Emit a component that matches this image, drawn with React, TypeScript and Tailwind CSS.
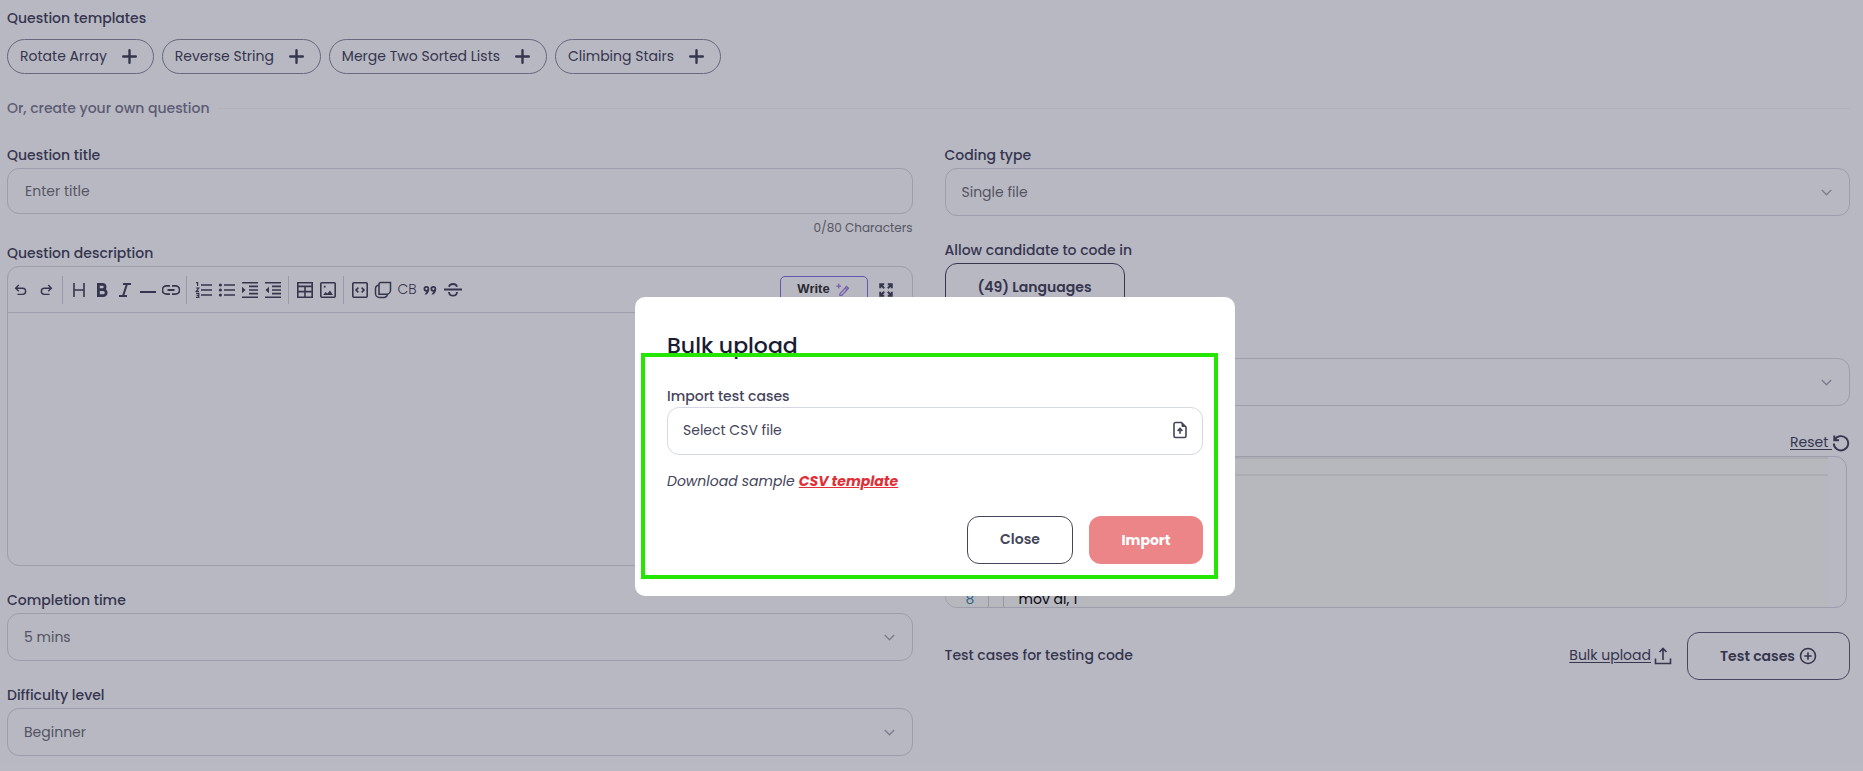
import { ReactNode, SVGProps } from 'react'

const templates = ['Rotate Array', 'Reverse String', 'Merge Two Sorted Lists', 'Climbing Stairs']

function Svg({ children, ...props }: SVGProps<SVGSVGElement>) {
  return (
    <svg width="18" height="18" viewBox="0 0 18 18" fill="none" stroke="currentColor" strokeWidth="1.6" aria-hidden="true" {...props}>
      {children}
    </svg>
  )
}

function Tool({ label, className = 'w-[23px]', children }: { label: string; className?: string; children: ReactNode }) {
  return (
    <button type="button" aria-label={label} className={`flex h-7 items-center justify-center ${className}`}>
      {children}
    </button>
  )
}

function Divider() {
  return <span className="h-7 w-px shrink-0 bg-[#d5d5de]" />
}

function SelectField({ id, label, value }: { id: string; label: string; value: string }) {
  return (
    <div>
      <label htmlFor={id} className="block h-[26px] font-medium leading-[26px]">{label}</label>
      <div className="grid items-center">
        <select id={id} className="col-start-1 row-start-1 h-12 w-full appearance-none rounded-xl border border-[#d8d8de] px-4 text-[#6f6f75]">
          <option>{value}</option>
        </select>
        <svg width="11" height="7" viewBox="0 0 11 7" fill="none" stroke="#aaaab4" strokeWidth="1.4" className="pointer-events-none col-start-1 row-start-1 mr-[18px] justify-self-end" aria-hidden="true">
          <path d="M.8 1 5.500 5.700 10.200 1" />
        </svg>
      </div>
    </div>
  )
}

function Toolbar() {
  return (
    <div className="flex h-[46px] items-center border-b border-[#d8d8de]">
      <div className="mr-1 flex">
        <Tool label="Undo" className="w-[25px]">
          <Svg width="16"><path d="M6.500 3.500 3 7l3.500 3.500M3.200 7h7.600a3.400 3.400 0 0 1 0 6.900H5" /></Svg>
        </Tool>
        <Tool label="Redo" className="w-[25px]">
          <Svg width="16"><path d="M11.500 3.500 15 7l-3.500 3.500M14.800 7H7.200a3.400 3.400 0 0 0 0 6.900H13" /></Svg>
        </Tool>
      </div>
      <Divider />
      <div className="flex px-1">
        <Tool label="Heading">
          <Svg><path d="M4 2v14M14 2v14M4 9h10" /></Svg>
        </Tool>
        <Tool label="Bold">
          <Svg strokeWidth="2.8"><path d="M5.4 3.4h4a2.6 2.6 0 0 1 0 5.3h-4zM5.4 8.7h4.8a2.8 2.8 0 0 1 0 5.9H5.4z" /></Svg>
        </Tool>
        <Tool label="Italic">
          <Svg strokeWidth="2"><path d="M7 3h8M3 15h8M11 3 7 15" /></Svg>
        </Tool>
        <Tool label="Horizontal line">
          <Svg strokeWidth="2"><path d="M1 11h16" /></Svg>
        </Tool>
        <Tool label="Link">
          <Svg strokeWidth="1.8"><path d="M8 4.8H4.6a4.2 4.2 0 0 0 0 8.4H8M10 4.8h3.4a4.2 4.2 0 0 1 0 8.4H10M5.5 9h7" /></Svg>
        </Tool>
      </div>
      <Divider />
      <div className="flex pr-1 pl-[5px]">
        <Tool label="Ordered list">
          <Svg><path d="M6 4h11M6 9h11M6 14h11" /><path strokeWidth="1.2" d="M1 1.600h1.6V5M1 7h2.800L1.200 10.400H4M1 12.400h2.800v4H1M1.600 14.400h2" /></Svg>
        </Tool>
        <Tool label="Bullet list">
          <Svg><path d="M6 4h11M6 9h11M6 14h11" /><path strokeWidth="3.200" strokeLinecap="round" d="M2.4 4h.01M2.4 9h.01M2.4 14h.01" /></Svg>
        </Tool>
        <Tool label="Indent">
          <Svg><path d="M1 1.8h16M8 5.4h9M8 9h9M8 12.6h9M1 16.2h16" /><path fill="currentColor" stroke="none" d="M1 5.8 4.500 9 1 12.200z" /></Svg>
        </Tool>
        <Tool label="Outdent">
          <Svg><path d="M1 1.8h16M8 5.4h9M8 9h9M8 12.6h9M1 16.2h16" /><path fill="currentColor" stroke="none" d="M5 5.8 1.500 9 5 12.200z" /></Svg>
        </Tool>
      </div>
      <Divider />
      <div className="flex px-1">
        <Tool label="Table">
          <Svg><path d="M1.800 1.800h14.400v14.400H1.800zM1.800 5.400h14.400M1.800 10.600h14.400M9 5.400V16" /></Svg>
        </Tool>
        <Tool label="Image">
          <Svg><rect x="1.8" y="1.8" width="14.4" height="14.4" rx="1" /><path fill="currentColor" stroke="none" d="m4.200 14 2.300-3 2 1.600L11 9.500l3 4.500zM4.800 4.800h1.800v1.800H4.800z" /></Svg>
        </Tool>
      </div>
      <Divider />
      <div className="flex px-1">
        <Tool label="Code">
          <Svg><rect x="1.8" y="1.8" width="14.4" height="14.4" rx="1" /><path d="M7.400 6.600 5 9l2.400 2.400M10.600 6.600 13 9l-2.400 2.400" /></Svg>
        </Tool>
        <Tool label="Copy block">
          <Svg strokeWidth="1.5"><path d="M7 1.5h9.500v7.700a4 4 0 0 1-4 4H5V3.500a2 2 0 0 1 2-2z" /><path d="M5 4.300A3.200 3.200 0 0 0 1.500 7.500v5a4 4 0 0 0 4 4h4a4 4 0 0 0 4-3.300" /></Svg>
        </Tool>
        <Tool label="Code block" className="w-[26px] pb-[2px] text-sm font-light">CB</Tool>
        <Tool label="Quote" className="w-5">
          <Svg width="16" height="16" fill="currentColor" stroke="none"><path fillRule="evenodd" d="M5 4.5a3.2 3.2 0 0 1 3.2 3.3c0 2.8-1.4 4.7-3.2 6.2H2.8c1-1 1.7-1.9 2.1-3A3.2 3.2 0 0 1 5 4.5zm0 1.9a1.3 1.3 0 1 0 0 2.6 1.3 1.3 0 0 0 0-2.6zM12.8 4.5A3.2 3.2 0 0 1 16 7.8c0 2.8-1.4 4.7-3.2 6.2h-2.2c1-1 1.7-1.9 2.1-3a3.2 3.2 0 0 1 .1-6.5zm0 1.9a1.3 1.3 0 1 0 0 2.6 1.3 1.3 0 0 0 0-2.6z" /></Svg>
        </Tool>
        <Tool label="Strikethrough" className="w-[26px]">
          <Svg strokeWidth="1.8"><path d="M0 8.5h18M5 5.800c.4-1.900 2-2.800 4-2.800s3.600.9 4 2.800M5 11c.2 2.4 1.9 3.7 4 3.7s3.800-1.300 4-3.700" /></Svg>
        </Tool>
      </div>
      <button type="button" className="ml-auto flex h-[27px] w-[88px] items-center justify-center gap-[6px] rounded-[5px] border border-[#8672ea] font-['Liberation_Sans',sans-serif] text-[13px] font-bold text-[#333]">
        Write
        <Svg width="14" height="14" stroke="#a180dc" strokeWidth="1.7"><path d="m5 14 8.500-9.500 2.500 2.300L7.500 16H5zM11.800 6.500l2.400 2.200M3.500 1v6M.5 4h6" /></Svg>
      </button>
      <Tool label="Full screen" className="mr-[14px] ml-[6px] w-6">
        <Svg width="16" height="16" strokeWidth="2.2"><path d="M2.5 7V2.5H7M3 3l4 4M11 2.5h4.5V7M15 3l-4 4M2.5 11v4.5H7M3 15l4-4M11 15.5h4.5V11M15 15l-4-4" /></Svg>
      </Tool>
    </div>
  )
}

function BulkUploadModal() {
  return (
    <div className="absolute inset-0 flex items-start justify-center bg-[#151536]/30 pt-[297px] pl-[7px]">
      <div role="dialog" aria-labelledby="bulk-title" className="relative w-[600px] rounded-[10px] bg-white p-8">
        <h2 id="bulk-title" className="text-[22px] font-medium leading-[33px] text-[#1a1c33]">Bulk upload</h2>
        <p id="import-label" className="mt-[22px] h-[23px] font-medium leading-6">Import test cases</p>
        <button type="button" aria-describedby="import-label" className="flex h-12 w-full items-center justify-between rounded-xl border border-[#d6d9e4] pr-[13px] pb-[2px] pl-[15px]">
          Select CSV file
          <Svg><path d="M10.500 1.500H4.600A1.600 1.600 0 0 0 3 3.100v11.800a1.600 1.600 0 0 0 1.600 1.600h8.800a1.600 1.600 0 0 0 1.600-1.600V6zM9 12.800V8M6.600 9.900 9 7.500l2.400 2.400" /><path fill="currentColor" strokeWidth="1" d="M11 2v3.500h3.500z" /></Svg>
        </button>
        <p className="mt-[14px] leading-6 italic">
          Download sample <a href="#template" className="font-bold text-[#e02f37] underline">CSV template</a>
        </p>
        <div className="mt-[23px] flex justify-end gap-4">
          <button type="button" className="h-12 w-[106px] rounded-xl border border-[#44445a] pb-[2px] font-semibold">Close</button>
          <button type="button" className="h-12 w-[114px] rounded-xl bg-[#eb8588] font-bold text-white">Import</button>
        </div>
        {/* Highlight frame */}
        <div className="pointer-events-none absolute top-14 right-[17px] bottom-[17px] left-[6px] border-4 border-[#25e600]" />
      </div>
    </div>
  )
}

export default function App() {
  return (
    <div className="relative min-h-screen bg-white pt-[6px] pr-[13px] pb-[15px] pl-[7px] font-[Poppins,Inter,sans-serif] text-sm text-[#44445a]">
      <h3 className="font-medium leading-6">Question templates</h3>
      <div className="mt-[9px] flex gap-2">
        {templates.map((name) => (
          <button key={name} type="button" className="flex h-[35px] items-center gap-[15px] rounded-full border border-[#8c8c9c] pr-4 pl-3">
            <span className="pb-[2px]">{name}</span>
            <Svg width="15" height="15" viewBox="0 0 15 15" strokeWidth="2.4" strokeLinecap="round"><path d="M7.5 1.2v12.600M1.2 7.5h12.600" /></Svg>
          </button>
        ))}
      </div>
      <div className="mt-[22px] flex items-center gap-2 leading-6">
        <span className="font-medium text-[#7b7b8e]">Or, create your own question</span>
        <hr className="flex-1 border-[#f6f6f6]" />
      </div>

      <div className="mt-[22px] grid grid-cols-2 gap-8">
        {/* Left column */}
        <div>
          <label htmlFor="title" className="block h-[26px] font-medium leading-[26px]">Question title</label>
          <input id="title" placeholder="Enter title" className="block h-[46px] w-full rounded-xl border border-[#d8d8de] px-[17px] placeholder:text-[#757578]" />
          <p className="mt-1 text-right text-xs leading-5 text-[#757578]">0/80 Characters</p>
          <p className="mt-[2px] h-[26px] font-medium leading-[26px]">Question description</p>
          <div className="h-[300px] rounded-xl border border-[#d8d8de]">
            <Toolbar />
            <textarea aria-label="Question description" className="block h-[250px] w-full resize-none" />
          </div>
          <div className="mt-[21px] flex flex-col gap-[21px]">
            <SelectField id="time" label="Completion time" value="5 mins" />
            <SelectField id="level" label="Difficulty level" value="Beginner" />
          </div>
        </div>

        {/* Right column */}
        <div>
          <SelectField id="coding" label="Coding type" value="Single file" />
          <p className="mt-[21px] h-[26px] font-medium leading-[26px]">Allow candidate to code in</p>
          <button type="button" className="h-12 w-[180px] rounded-xl border border-[#44445a] font-semibold">(49) Languages</button>
          <div className="mt-[21px]">
            <SelectField id="language" label="Default language" value="Assembly" />
          </div>
          <div className="mt-6 flex h-[26px] items-center justify-between">
            <span className="font-medium">Code stub</span>
            <button type="button" className="flex items-center">
              <span className="pb-[2px] underline underline-offset-2">Reset&nbsp;</span>
              <Svg strokeWidth="1.9"><path d="M2.3 1.5v4.700H7M2.600 6A7.200 7.200 0 1 1 1.800 9.500" /></Svg>
            </button>
          </div>
          <div className="mr-[3px] h-[152px] overflow-hidden rounded-xl border border-[#d8d8de]">
            <div className="mr-[18px] flex h-full flex-col bg-[#fefffa]">
              <div className="h-[19px] shrink-0 border-y-2 border-[#eeeeea]" />
              <div className="mt-auto flex h-4 shrink-0 leading-4">
                <span className="w-[43px] border-r border-[#d0d0d0] pl-5 text-[#3d86a8]">8</span>
                <span className="w-[15px] border-r border-[#d0d0d0]" />
                <code className="pl-[15px] font-[Poppins,Inter,sans-serif] text-black">mov al, 1</code>
              </div>
            </div>
          </div>
          <div className="mt-6 flex items-center">
            <span className="pb-[2px] font-medium">Test cases for testing code</span>
            <a href="#bulk" className="ml-auto flex items-center gap-[3px]">
              <span className="pb-[2px] underline underline-offset-2">Bulk upload</span>
              <Svg><path d="M1.500 11.500v5h15v-5M9 13V1.500M5.500 5 9 1.500 12.500 5" /></Svg>
            </a>
            <button type="button" className="ml-[15px] flex h-12 w-[163px] items-center justify-center gap-1 rounded-xl border border-[#5d5d78] font-semibold">
              <span className="pb-px">Test cases</span>
              <Svg><circle cx="9" cy="9" r="7.5" /><path d="M9 5.300v7.400M5.300 9h7.400" /></Svg>
            </button>
          </div>
        </div>
      </div>

      <BulkUploadModal />
    </div>
  )
}
